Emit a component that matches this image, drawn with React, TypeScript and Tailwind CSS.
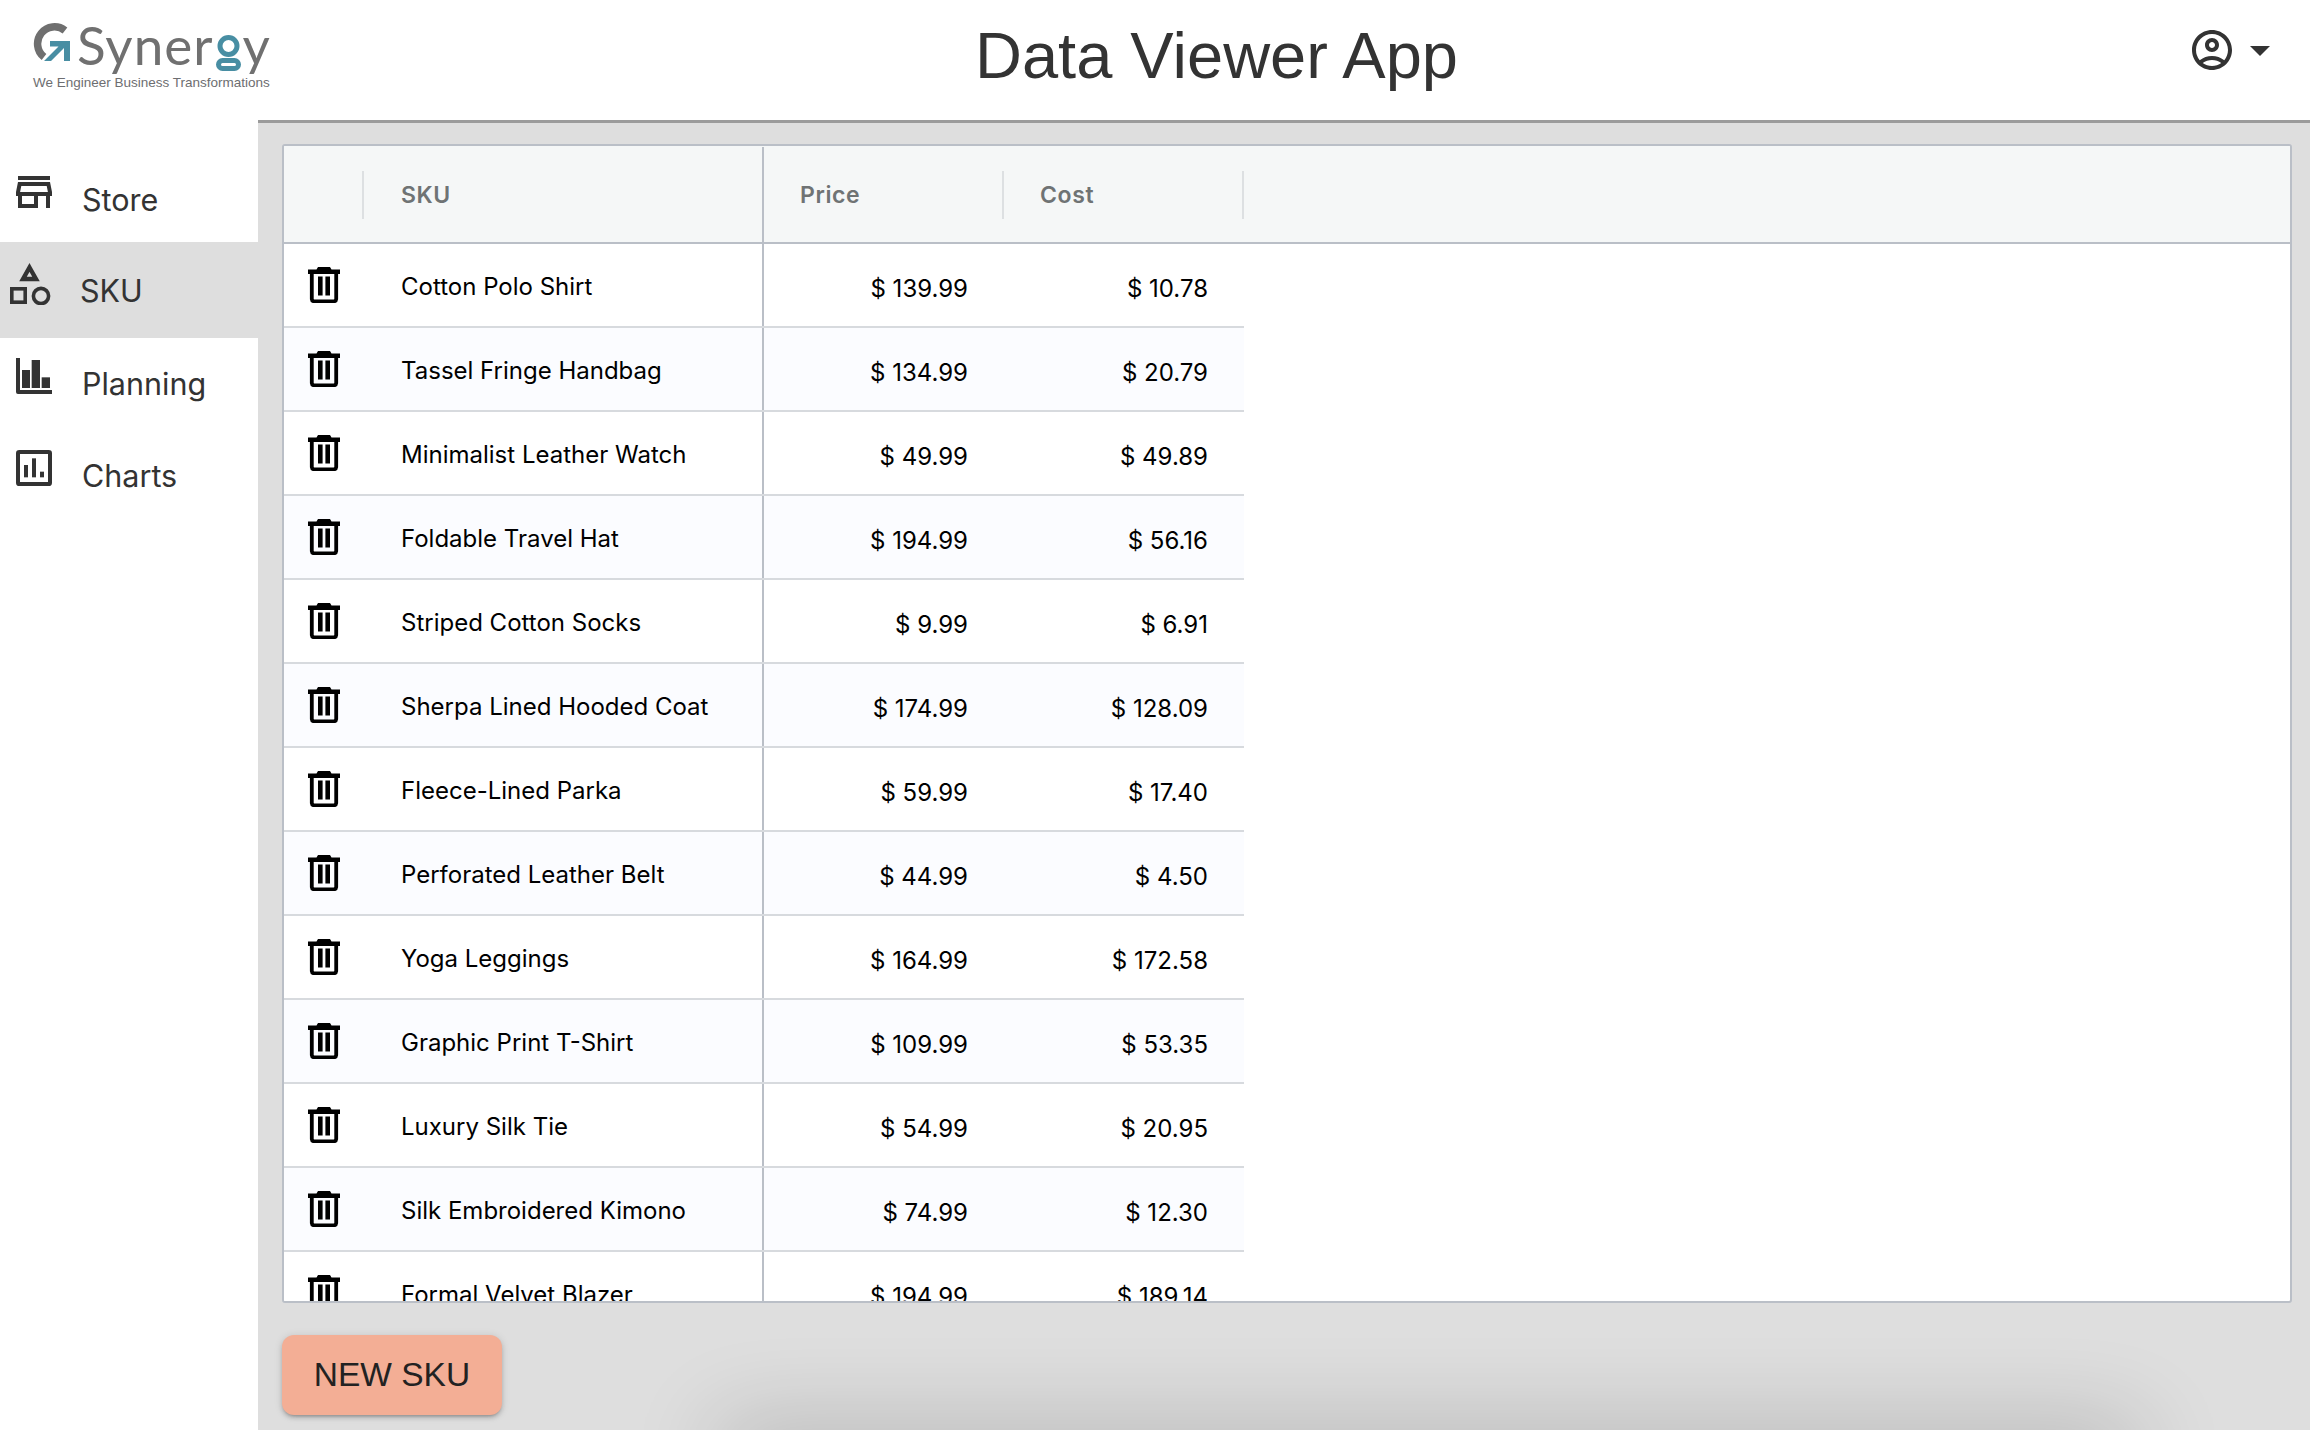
import { MdOutlineAccountCircle, MdArrowDropDown, MdOutlineStore } from "react-icons/md";

const rows: [string, string, string][] = [
  ["Cotton Polo Shirt", "$ 139.99", "$ 10.78"],
  ["Tassel Fringe Handbag", "$ 134.99", "$ 20.79"],
  ["Minimalist Leather Watch", "$ 49.99", "$ 49.89"],
  ["Foldable Travel Hat", "$ 194.99", "$ 56.16"],
  ["Striped Cotton Socks", "$ 9.99", "$ 6.91"],
  ["Sherpa Lined Hooded Coat", "$ 174.99", "$ 128.09"],
  ["Fleece-Lined Parka", "$ 59.99", "$ 17.40"],
  ["Perforated Leather Belt", "$ 44.99", "$ 4.50"],
  ["Yoga Leggings", "$ 164.99", "$ 172.58"],
  ["Graphic Print T-Shirt", "$ 109.99", "$ 53.35"],
  ["Luxury Silk Tie", "$ 54.99", "$ 20.95"],
  ["Silk Embroidered Kimono", "$ 74.99", "$ 12.30"],
  ["Formal Velvet Blazer", "$ 194.99", "$ 189.14"],
];

function Trash() {
  return (
    <svg width="32" height="36" viewBox="0 0 32 36" fill="none" className="shrink-0">
      <path d="M8.5 2.6 10 0h12l1.5 2.6H32V7H0V2.6z" fill="#000" />
      <path d="M3.800 6v26a2.500 2.500 0 0 0 2.500 2.300h19.400a2.500 2.500 0 0 0 2.500-2.300V6" stroke="#000" strokeWidth="3.8" />
      <rect x="10" y="9.500" width="4.600" height="19" fill="#000" />
      <rect x="17.400" y="9.500" width="4.600" height="19" fill="#000" />
    </svg>
  );
}

function SkuIcon() {
  return (
    <svg width="41" height="42" viewBox="0 0 41 42" fill="none" className="shrink-0">
      <path d="M19.500 4.500 26 16H13z" stroke="#333" strokeWidth="4.400" />
      <rect x="1.800" y="25.800" width="13.400" height="13.400" stroke="#333" strokeWidth="3.600" />
      <circle cx="31" cy="33" r="7.600" stroke="#333" strokeWidth="3.600" />
    </svg>
  );
}

function PlanningIcon() {
  return (
    <svg width="36" height="36" viewBox="0 0 108 108" className="shrink-0" fill="#333">
      <path d="M0 0h12v96h96v12H6a6 6 0 0 1-6-6z" />
      <rect x="18" y="36" width="24" height="54" />
      <rect x="47" y="6" width="25" height="84" />
      <rect x="77" y="58" width="25" height="32" />
    </svg>
  );
}

function ChartsIcon() {
  return (
    <svg width="36" height="36" viewBox="0 0 108 108" className="shrink-0" fill="#333">
      <path fillRule="evenodd" d="M10 0h88a10 10 0 0 1 10 10v88a10 10 0 0 1-10 10H10A10 10 0 0 1 0 98V10A10 10 0 0 1 10 0zm2 12v84h84V12z" />
      <rect x="24" y="45" width="12" height="37" />
      <rect x="48" y="25" width="12" height="57" />
      <rect x="72" y="65" width="12" height="17" />
    </svg>
  );
}

function Logo() {
  return (
    <div className="pl-[33px] pt-[21px] h-[122px] w-[260px]">
      <div className="flex items-start h-[52px]">
        <svg width="37" height="39" viewBox="0 0 37 39" fill="none" className="shrink-0 mt-[2px]">
          <path d="M32 7.500A15.500 15.500 0 1 0 11 34" stroke="#6f6f6f" strokeWidth="7.500" />
          <path d="M17 18h20v20h-6V25L18 38H11l14.500-14.500H17z" fill="#488ea3" />
        </svg>
        <span className="ml-[7px] font-['Lato',sans-serif] text-[53px] leading-[48px] text-[#707070] tracking-[1px]">Syner</span>
        <svg width="25" height="37" viewBox="0 0 25 37" fill="none" className="shrink-0 ml-[2px] mt-[14px]">
          <circle cx="12.500" cy="11" r="8.500" stroke="#488ea3" strokeWidth="5" />
          <rect x="2.500" y="25.500" width="20" height="8" rx="4" stroke="#488ea3" strokeWidth="5" />
        </svg>
        <span className="ml-[2px] font-['Lato',sans-serif] text-[53px] leading-[48px] text-[#707070]">y</span>
      </div>
      <div className="mt-[2px] font-['Liberation_Sans',sans-serif] text-[13.5px] leading-[16px] text-[#6d6e71] whitespace-nowrap">We Engineer Business Transformations</div>
    </div>
  );
}

function Sidebar() {
  return (
    <aside className="w-[258px] shrink-0 bg-white h-full font-['Inter',sans-serif] text-[30.5px] text-[#333] relative z-10">
      <Logo />
      <div className="h-[28px]" />
      <div className="flex items-center h-[92px]">
        <MdOutlineStore className="text-[48px] ml-[10px] mb-[8px] shrink-0" />
        <span className="ml-[24px] mt-[7px]">Store</span>
      </div>
      <div className="flex items-center h-[96px] bg-[#dedede]">
        <div className="ml-[10px] mb-[12px]"><SkuIcon /></div>
        <span className="ml-[29px] mt-[2px]">SKU</span>
      </div>
      <div className="flex items-center h-[92px]">
        <div className="ml-[16px] mb-[16px]"><PlanningIcon /></div>
        <span className="ml-[30px]">Planning</span>
      </div>
      <div className="flex items-center h-[92px]">
        <div className="ml-[16px] mb-[16px]"><ChartsIcon /></div>
        <span className="ml-[30px]">Charts</span>
      </div>
    </aside>
  );
}

function Header() {
  return (
    <header className="h-[123px] shrink-0 bg-white border-b-[3px] border-[#9b9b9b] flex items-center justify-end pr-[26px] pb-[9px]">
      <h1 className="mr-[730px] font-['Liberation_Sans',sans-serif] text-[65px] leading-none font-normal text-[#333] whitespace-nowrap">Data Viewer App</h1>
      <MdOutlineAccountCircle className="text-[48px] text-[#333] shrink-0 mb-[11px]" />
      <MdArrowDropDown className="text-[48px] text-[#333] shrink-0 mb-[11px]" />
    </header>
  );
}

function HeadCell({ label, className }: { label: string; className: string }) {
  return (
    <div className={`flex items-center h-full relative ${className}`}>
      <span className="mt-[2px]">{label}</span>
      <span className="absolute right-0 top-[24px] h-[48px] w-[2px] bg-[#dde0e2]" />
    </div>
  );
}

function Table() {
  return (
    <div className="h-[1159px] bg-white border-2 border-[#babfc7] rounded-[3px] overflow-hidden font-['Inter',sans-serif]">
      <div className="flex h-[98px] pt-[1px] bg-[#f5f7f7] border-b-2 border-[#babfc7] text-[23px] font-semibold text-[#6f7374] tracking-[0.6px]">
        <HeadCell label="" className="w-[80px]" />
        <div className="flex items-center w-[400px] pl-[37px] border-r-2 border-[#babfc7]"><span className="mt-[2px]">SKU</span></div>
        <HeadCell label="Price" className="w-[240px] pl-[36px]" />
        <HeadCell label="Cost" className="w-[240px] pl-[36px]" />
      </div>
      {rows.map(([name, price, cost], i) => (
        <div key={name} className={`flex h-[84px] w-[960px] shrink-0 border-b-2 border-[#d7dade] text-[24px] text-black ${i % 2 ? "bg-[#fbfcff]" : "bg-white"}`}>
          <div className="w-[80px] flex items-center pl-[24px] pb-[1px]"><Trash /></div>
          <div className="w-[400px] flex items-center pl-[37px] border-r-2 border-[#babfc7] pt-[4px]"><span>{name}</span></div>
          <div className="w-[240px] flex items-center justify-end pr-[36px] pt-[7px]"><span>{price}</span></div>
          <div className="w-[240px] flex items-center justify-end pr-[36px] pt-[7px]"><span>{cost}</span></div>
        </div>
      ))}
    </div>
  );
}

export default function App() {
  return (
    <div className="flex w-[2310px] h-[1430px] overflow-hidden bg-white">
      <Sidebar />
      <div className="flex flex-col flex-1 min-w-0">
        <Header />
        <main className="flex-1 bg-[#dedede] pt-[21px] pl-[24px] pr-[18px] relative overflow-hidden">
          <Table />
          <button className="mt-[32px] w-[220px] h-[80px] rounded-[12px] bg-[#f3ae95] text-[33.5px] text-[#222] font-['Liberation_Sans',sans-serif] shadow-[0_3px_3px_-2px_rgba(0,0,0,0.2),0_3px_4px_0_rgba(0,0,0,0.14),0_1px_8px_0_rgba(0,0,0,0.12)]">NEW SKU</button>
          <div className="absolute left-[470px] right-[180px] top-[1312px] h-[40px] shadow-[0_0_90px_10px_rgba(0,0,0,0.2)]" />
        </main>
      </div>
    </div>
  );
}
